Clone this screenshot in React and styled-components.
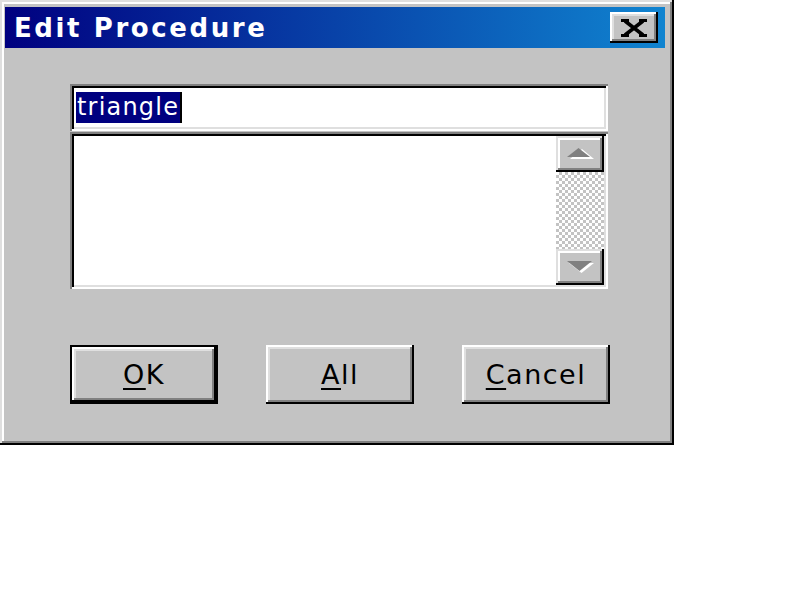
import styled, { createGlobalStyle } from 'styled-components';

const GlobalStyle = createGlobalStyle`
  html, body {
    margin: 0;
    padding: 0;
    background: #ffffff;
  }
  body {
    font-family: "DejaVu Sans", "Liberation Sans", sans-serif;
  }
`;

const raised = `
  box-shadow:
    inset -2px -2px #000000,
    inset 2px 2px #ffffff,
    inset -4px -4px #808080,
    inset 4px 4px #dfdfdf;
`;

const sunken = `
  box-shadow:
    inset 2px 2px #808080,
    inset -2px -2px #ffffff,
    inset 4px 4px #000000,
    inset -4px -4px #dfdfdf;
`;

export default function App() {
  return (
    <>
      <GlobalStyle />
      <Window>
        <TitleBar>
          <Title>Edit Procedure</Title>
          <CloseButton aria-label="Close">
            <svg width="26" height="18" viewBox="0 0 26 18">
              <path d="M4 2 L22 16 M22 2 L4 16" stroke="#000" strokeWidth="3.6" />
              <rect x="0" y="0" width="8" height="3" fill="#000" />
              <rect x="18" y="0" width="8" height="3" fill="#000" />
              <rect x="0" y="15" width="8" height="3" fill="#000" />
              <rect x="18" y="15" width="8" height="3" fill="#000" />
            </svg>
          </CloseButton>
        </TitleBar>

        <Body>
          <NameField>
            <Selected>triangle</Selected>
            <Caret />
          </NameField>

          <ListBox>
            <ListArea />
            <ScrollBar>
              <ScrollButton>
                <svg width="28" height="14" viewBox="0 0 28 14">
                  <polygon points="4,12 16,2 28,12" fill="#ffffff" />
                  <polygon points="1,10 12.5,1 24,10" fill="#808080" />
                </svg>
              </ScrollButton>
              <Track />
              <ScrollButton>
                <svg width="28" height="14" viewBox="0 0 28 14">
                  <polygon points="3,3 28,3 15.5,13" fill="#ffffff" />
                  <polygon points="1,1 26,1 13.5,11" fill="#808080" />
                </svg>
              </ScrollButton>
            </ScrollBar>
          </ListBox>

          <ButtonRow>
            <Button $default>
              <Key>O</Key>K
            </Button>
            <Button>
              <Key>A</Key>ll
            </Button>
            <Button>
              <Key>C</Key>ancel
            </Button>
          </ButtonRow>
        </Body>
      </Window>
    </>
  );
}

const Window = styled.div`
  width: 674px;
  box-sizing: border-box;
  padding: 4px;
  background: #c3c3c3;
  box-shadow:
    inset -2px -2px #000000,
    inset 2px 2px #dfdfdf,
    inset -4px -4px #808080,
    inset 4px 4px #ffffff;
`;

const TitleBar = styled.div`
  display: flex;
  align-items: center;
  justify-content: space-between;
  height: 41px;
  margin: 3px 5px 0 1px;
  padding: 0 7px 0 9px;
  background: linear-gradient(to right, #000080, #1084d0);
`;

const Title = styled.span`
  color: #ffffff;
  font-family: "DejaVu Sans", sans-serif;
  font-weight: bold;
  font-size: 26px;
  letter-spacing: 2.6px;
`;

const CloseButton = styled.button`
  display: flex;
  align-items: center;
  justify-content: center;
  width: 48px;
  height: 31px;
  padding: 0;
  border: none;
  background: #c3c3c3;
  ${raised}
`;

const Body = styled.div`
  padding: 36px 60px 37px 66px;
  display: flex;
  flex-direction: column;
`;

const NameField = styled.div`
  display: flex;
  align-items: center;
  height: 47px;
  margin-right: 2px;
  box-sizing: border-box;
  padding: 0 6px;
  background: #ffffff;
  ${sunken}
`;

const Selected = styled.span`
  display: inline-block;
  height: 31px;
  line-height: 31px;
  padding: 0 1px;
  background: #000080;
  color: #ffffff;
  font-family: "DejaVu Sans", sans-serif;
  font-size: 24px;
  letter-spacing: 1.2px;
`;

const Caret = styled.span`
  width: 2px;
  height: 31px;
  background: #000000;
`;

const ListBox = styled.div`
  display: flex;
  height: 157px;
  margin: 1px 2px 0 0;
  box-sizing: border-box;
  padding: 4px;
  background: #ffffff;
  ${sunken}
`;

const ListArea = styled.div`
  flex: 1;
`;

const ScrollBar = styled.div`
  width: 48px;
  display: flex;
  flex-direction: column;
`;

const ScrollButton = styled.div`
  height: 36px;
  display: flex;
  align-items: center;
  justify-content: center;
  background: #c3c3c3;
  box-shadow:
    inset -2px -2px #000000,
    inset 2px 2px #dfdfdf,
    inset -4px -4px #808080,
    inset 4px 4px #ffffff;
`;

const Track = styled.div`
  flex: 1;
  background: repeating-conic-gradient(#c3c3c3 0 25%, #ffffff 0 50%) 0 0 / 6px 6px;
`;

const ButtonRow = styled.div`
  display: flex;
  justify-content: space-between;
  margin-top: 56px;
`;

const Button = styled.button`
  width: 148px;
  height: 59px;
  padding: 0;
  box-sizing: border-box;
  background: #c3c3c3;
  color: #000000;
  font-family: "DejaVu Sans", sans-serif;
  font-size: 27px;
  letter-spacing: 1.5px;
  border: ${(p) => (p.$default ? '2px solid #000000' : 'none')};
  ${raised}
`;

const Key = styled.span`
  text-decoration: underline;
  text-decoration-thickness: 2px;
  text-underline-offset: 4px;
`;
